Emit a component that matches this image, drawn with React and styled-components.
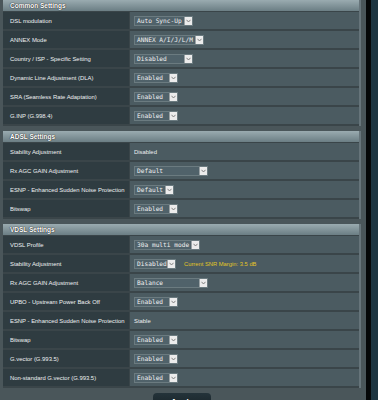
import React from "react"
import styled, { createGlobalStyle } from "styled-components"

const sections = [
  {
    title: "Common Settings",
    rows: [
      { label: "DSL modulation", select: "Auto Sync-Up", w: 59 },
      { label: "ANNEX Mode", select: "ANNEX A/I/J/L/M", w: 70 },
      { label: "Country / ISP - Specific Setting", select: "Disabled", w: 59 },
      { label: "Dynamic Line Adjustment (DLA)", select: "Enabled", w: 44 },
      { label: "SRA (Seamless Rate Adaptation)", select: "Enabled", w: 44 },
      { label: "G.INP (G.998.4)", select: "Enabled", w: 44 },
    ],
  },
  {
    title: "ADSL Settings",
    rows: [
      { label: "Stability Adjustment", text: "Disabled" },
      { label: "Rx AGC GAIN Adjustment", select: "Default", w: 74 },
      { label: "ESNP - Enhanced Sudden Noise Protection", select: "Default", w: 40 },
      { label: "Bitswap", select: "Enabled", w: 44 },
    ],
  },
  {
    title: "VDSL Settings",
    rows: [
      { label: "VDSL Profile", select: "30a multi mode", w: 66 },
      {
        label: "Stability Adjustment",
        select: "Disabled",
        w: 42,
        note: "Current SNR Margin: 3.5 dB",
      },
      { label: "Rx AGC GAIN Adjustment", select: "Balance", w: 74 },
      { label: "UPBO - Upstream Power Back Off", select: "Enabled", w: 44 },
      { label: "ESNP - Enhanced Sudden Noise Protection", text: "Stable" },
      { label: "Bitswap", select: "Enabled", w: 44 },
      { label: "G.vector (G.993.5)", select: "Enabled", w: 44 },
      { label: "Non-standard G.vector (G.993.5)", select: "Enabled", w: 44 },
    ],
  },
]

function Select({ value, width }) {
  return (
    <SelectBox $width={width}>
      <SelectText>{value}</SelectText>
      <Arrow>
        <svg width="5" height="4" viewBox="0 0 5 4">
          <polyline points="0.5,0.8 2.5,3 4.5,0.8" fill="none" stroke="#777" strokeWidth="0.9" />
        </svg>
      </Arrow>
    </SelectBox>
  )
}

export default function App() {
  return (
    <>
      <GlobalStyle />
      <Page>
        <Main>
          {sections.map((s) => (
            <Table key={s.title}>
              <Header>{s.title}</Header>
              {s.rows.map((r, i) => (
                <Row key={i}>
                  <Label>{r.label}</Label>
                  <Value>
                    {r.select ? <Select value={r.select} width={r.w} /> : <Plain>{r.text}</Plain>}
                    {r.note && <Note>{r.note}</Note>}
                  </Value>
                </Row>
              ))}
            </Table>
          ))}
          <ButtonRow>
            <Button>Apply</Button>
          </ButtonRow>
        </Main>
        <BlackStrip />
        <SideStrip />
      </Page>
    </>
  )
}

const GlobalStyle = createGlobalStyle`
  html, body {
    margin: 0;
    padding: 0;
    background: #4a565a;
    overflow: hidden;
  }
  body {
    font-family: "Liberation Sans", Arial, sans-serif;
  }
`

const Page = styled.div`
  display: flex;
  height: 400px;
`

const Main = styled.div`
  width: 366px;
  box-sizing: border-box;
  padding: 0 5px 0 3px;
  background: #4a565a;
  display: flex;
  flex-direction: column;
  gap: 5px;
`

const BlackStrip = styled.div`
  width: 5px;
  background: #050708;
`

const SideStrip = styled.div`
  flex: 1;
  background: #1c3440;
`

const Table = styled.div`
  border-right: 2px solid #66747a;
  background: #3a4549;
`

const Header = styled.div`
  height: 11px;
  line-height: 11px;
  border-bottom: 1px solid #3a4549;
  padding-left: 7px;
  background: linear-gradient(180deg, #9aabb0 0%, #6b7e84 100%);
  color: #ffffff;
  font-weight: bold;
  font-size: 6.5px;
  text-shadow: 0 0 1px #222, 0 0 1px #222;
`

const Row = styled.div`
  display: grid;
  grid-template-columns: 127px 1fr;
  height: 19px;
  box-sizing: border-box;
  border-bottom: 2px solid #3a4549;
`

const Label = styled.div`
  display: flex;
  align-items: center;
  padding-left: 7px;
  background: #2f3c41;
  border-right: 1px solid #3a4549;
  color: #eef0f1;
  font-size: 5.9px;
  white-space: nowrap;
`

const Value = styled.div`
  display: flex;
  align-items: center;
  gap: 8px;
  padding-left: 4px;
  background: #4b5b61;
`

const SelectBox = styled.div`
  display: flex;
  width: ${(p) => p.$width}px;
  height: 10px;
  box-sizing: border-box;
  border: 1px solid #6b7b80;
  background: #50626a;
`

const SelectText = styled.span`
  flex: 1;
  padding-left: 2px;
  line-height: 8px;
  font-family: "DejaVu Sans Mono", "Liberation Mono", monospace;
  font-size: 6.2px;
  color: #f0f0f0;
  white-space: nowrap;
  overflow: hidden;
`

const Arrow = styled.span`
  width: 7px;
  display: flex;
  align-items: center;
  justify-content: center;
  background: #ececec;
  border-left: 1px solid #9aa2a5;
`

const Plain = styled.span`
  color: #eef0f1;
  font-size: 5.9px;
`

const Note = styled.span`
  color: #e2c625;
  font-size: 5.8px;
  white-space: nowrap;
`

const ButtonRow = styled.div`
  display: flex;
  justify-content: center;
`

const Button = styled.div`
  width: 58px;
  height: 20px;
  box-sizing: border-box;
  padding-top: 4px;
  border-radius: 4px;
  background: linear-gradient(180deg, #24333a 0%, #141d21 100%);
  color: #ffffff;
  text-align: center;
  font-size: 8px;
  font-weight: bold;
`
